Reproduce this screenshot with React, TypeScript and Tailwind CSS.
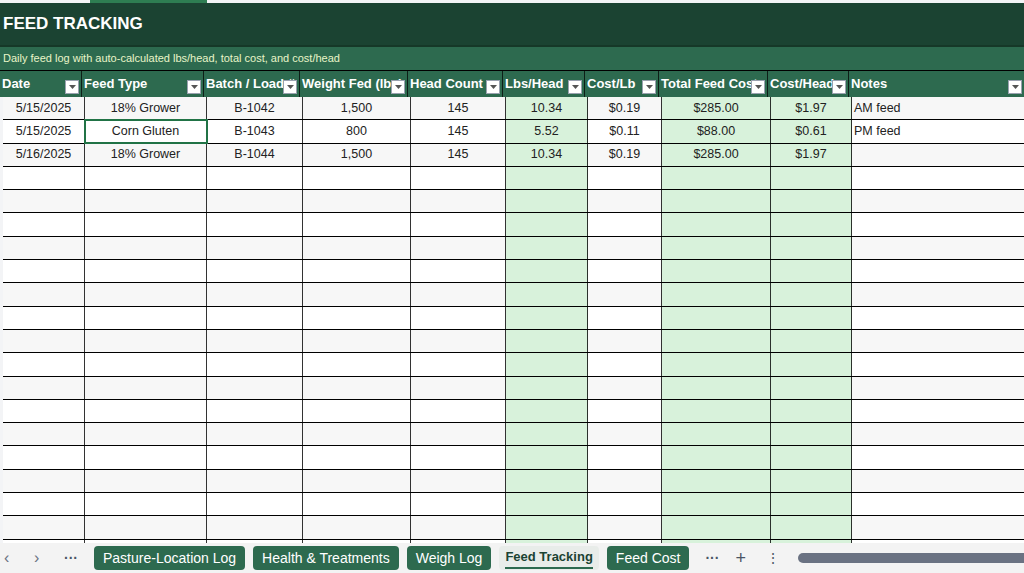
import React from "react";

const cols = [
  { n: "Date", w: 82 },
  { n: "Feed Type", w: 122 },
  { n: "Batch / Load #", w: 96 },
  { n: "Weight Fed (lbs)", w: 108 },
  { n: "Head Count", w: 95 },
  { n: "Lbs/Head", w: 82, g: true },
  { n: "Cost/Lb", w: 74 },
  { n: "Total Feed Cost", w: 109, g: true },
  { n: "Cost/Head", w: 81, g: true },
  { n: "Notes", w: 176, l: true },
];

const data = [
  ["5/15/2025", "18% Grower", "B-1042", "1,500", "145", "10.34", "$0.19", "$285.00", "$1.97", "AM feed"],
  ["5/15/2025", "Corn Gluten", "B-1043", "800", "145", "5.52", "$0.11", "$88.00", "$0.61", "PM feed"],
  ["5/16/2025", "18% Grower", "B-1044", "1,500", "145", "10.34", "$0.19", "$285.00", "$1.97", ""],
];

function Arrow() {
  return (
    <span className="absolute right-[2px] top-[9px] w-[14px] h-[14px] bg-white border border-gray-400 flex items-center justify-center">
      <svg width="7" height="4" viewBox="0 0 7 4"><path d="M0 0h7L3.5 4z" fill="#555" /></svg>
    </span>
  );
}

export default function App() {
  const rows = [...data, ...Array(17).fill(null)];
  return (
    <div className="w-[1024px] h-[573px] overflow-hidden bg-white flex flex-col" style={{ fontFamily: "Arial, 'Liberation Sans', sans-serif" }}>
      <div className="h-[3px] bg-gray-100 flex shrink-0"><div className="w-[90px]" /><div className="w-[117px] bg-[#2e7d52]" /></div>
      <div className="flex shrink-0">
        <div className="w-[3px] bg-gray-100" />
        <div className="flex-1">
          <div className="h-[44px] bg-[#1b4332] text-white font-bold text-[17px] flex items-center pl-[3px] border-b-2 border-[#163828]">FEED TRACKING</div>
          <div className="h-[23px] bg-[#2d6a4f] text-[#e8f5c8] text-[11px] flex items-center pl-[3px]">Daily feed log with auto-calculated lbs/head, total cost, and cost/head</div>
          <div className="flex h-[27px] bg-[#2d6a4f] border-t border-black">
            {cols.map((c, i) => (
              <div key={i} className="relative shrink-0 border-r border-black/70 text-white font-bold text-[13px] pl-[2px] flex items-center overflow-hidden whitespace-nowrap" style={{ width: c.w }}>
                {c.n}
                <Arrow />
              </div>
            ))}
          </div>
        </div>
      </div>
      <div className="flex-1 overflow-hidden flex">
        <div className="w-[3px] bg-gray-100 shrink-0" />
        <div className="flex-1">
          {rows.map((r, ri) => (
            <div key={ri} className={`flex h-[23.3px] border-b border-black ${ri % 2 === 0 ? "bg-[#f7f7f7]" : "bg-white"}`}>
              {cols.map((c, ci) => (
                <div key={ci} className={`shrink-0 border-r border-black/80 text-[12.5px] text-[#222] flex items-center whitespace-nowrap ${c.l ? "pl-[2px]" : "justify-center"} ${c.g ? "bg-[#d8f2db]" : ""} ${ri === 1 && ci === 1 ? "outline-2 outline-[#217346] -outline-offset-1" : ""}`} style={{ width: c.w }}>
                  {r ? r[ci] : ""}
                </div>
              ))}
            </div>
          ))}
        </div>
      </div>
      <div className="h-[30px] shrink-0 bg-[#f3f3f3] flex items-center text-[14px] gap-[8px] pl-[4px]">
        <span className="text-gray-500 w-[22px] text-[16px]">‹</span>
        <span className="text-gray-500 w-[22px] text-[16px]">›</span>
        <span className="text-gray-600 w-[22px] font-bold">···</span>
        {["Pasture-Location Log", "Health & Treatments", "Weigh Log"].map(t => (
          <span key={t} className="bg-[#2d6a4f] text-white rounded px-[9px] h-[24px] flex items-center">{t}</span>
        ))}
        <span className="px-[6px] h-[24px] flex flex-col justify-center text-[#1b4332] font-bold text-[13px] bg-[#e8ece9] rounded">
          <span>Feed Tracking</span>
          <span className="h-[2px] bg-[#2d6a4f] mt-[1px]" />
        </span>
        <span className="bg-[#2d6a4f] text-white rounded px-[9px] h-[24px] flex items-center">Feed Cost</span>
        <span className="text-gray-600 font-bold ml-[8px]">···</span>
        <span className="text-gray-600 text-[18px] ml-[8px]">+</span>
        <span className="text-gray-600 ml-[12px]">⋮</span>
        <div className="ml-[10px] flex-1 h-[10px] bg-gray-500 rounded-l-full" />
      </div>
    </div>
  );
}
